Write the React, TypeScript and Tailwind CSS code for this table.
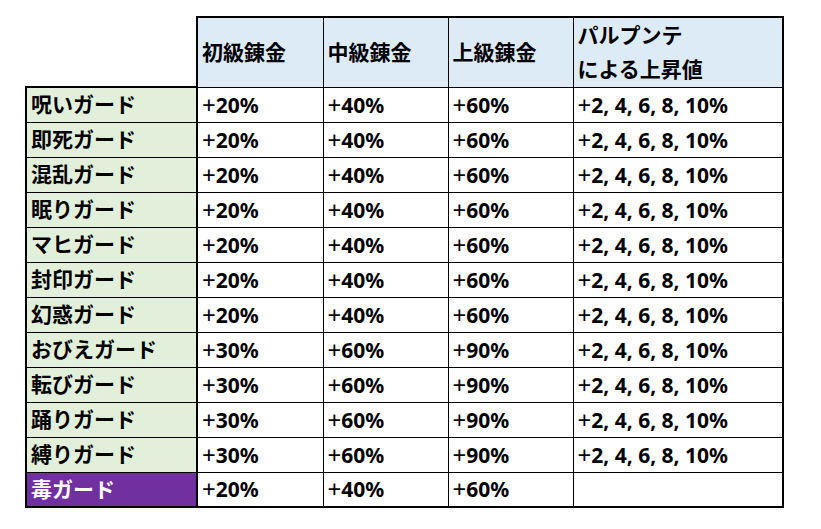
const ROWS: { name: string; v: [string, string, string]; parupunte?: boolean; poison?: boolean }[] = [
  { name: "呪いガード", v: ["20", "40", "60"], parupunte: true },
  { name: "即死ガード", v: ["20", "40", "60"], parupunte: true },
  { name: "混乱ガード", v: ["20", "40", "60"], parupunte: true },
  { name: "眠りガード", v: ["20", "40", "60"], parupunte: true },
  { name: "マヒガード", v: ["20", "40", "60"], parupunte: true },
  { name: "封印ガード", v: ["20", "40", "60"], parupunte: true },
  { name: "幻惑ガード", v: ["20", "40", "60"], parupunte: true },
  { name: "おびえガード", v: ["30", "60", "90"], parupunte: true },
  { name: "転びガード", v: ["30", "60", "90"], parupunte: true },
  { name: "踊りガード", v: ["30", "60", "90"], parupunte: true },
  { name: "縛りガード", v: ["30", "60", "90"], parupunte: true },
  { name: "毒ガード", v: ["20", "40", "60"], poison: true },
];

const FONT = { fontFamily: '"Noto Sans", "Noto Sans CJK JP", sans-serif' };

// the plus sign is thin and wide in the sheet, unlike the bold digits
function Plus() {
  return <span className="font-normal text-[24px] leading-none align-[-1px]">+</span>;
}

export default function App() {
  return (
    <div className="w-[821px] h-[529px] bg-white pt-4 pl-[25px]" style={FONT}>
      <table className="border-collapse table-fixed text-[21px] font-bold text-black leading-none">
        <colgroup>
          <col className="w-[171px]" />
          <col className="w-[126px]" />
          <col className="w-[125px]" />
          <col className="w-[125px]" />
          <col className="w-[210px]" />
        </colgroup>
        <thead>
          <tr className="h-[70px]">
            <th className="border-0" />
            <th className="bg-[#ddebf7] border-2 border-black border-r border-b text-left font-bold pl-1 align-middle">初級錬金</th>
            <th className="bg-[#ddebf7] border-t-2 border-black border-r border-b text-left font-bold pl-1 align-middle">中級錬金</th>
            <th className="bg-[#ddebf7] border-t-2 border-black border-r border-b text-left font-bold pl-1 align-middle">上級錬金</th>
            <th className="bg-[#ddebf7] border-2 border-black border-l border-b text-left font-bold pl-1 align-middle leading-[34px]">
              パルプンテ
              <br />
              による上昇値
            </th>
          </tr>
        </thead>
        <tbody>
          {ROWS.map((r, i) => {
            const last = i === ROWS.length - 1;
            return (
              <tr key={r.name} className="h-[35px]">
                <td
                  className={
                    (r.poison ? "bg-[#7030a0] text-white " : "bg-[#e2efda] ") +
                    "border-l-2 border-r-2 border-black pl-1 " +
                    (i === 0 ? "border-t-2 " : "border-t ") +
                    (last ? "border-b-2" : "border-b")
                  }
                >
                  {r.name}
                </td>
                {r.v.map((x, j) => (
                  <td key={j} className={"border border-black pl-1 " + (last ? "border-b-2" : "")}>
                    <Plus />
                    {x}%
                  </td>
                ))}
                <td className={"border border-black border-r-2 pl-1 " + (last ? "border-b-2" : "")}>
                  {r.parupunte && (
                    <>
                      <Plus />
                      2, 4, 6, 8, 10%
                    </>
                  )}
                </td>
              </tr>
            );
          })}
        </tbody>
      </table>
    </div>
  );
}
